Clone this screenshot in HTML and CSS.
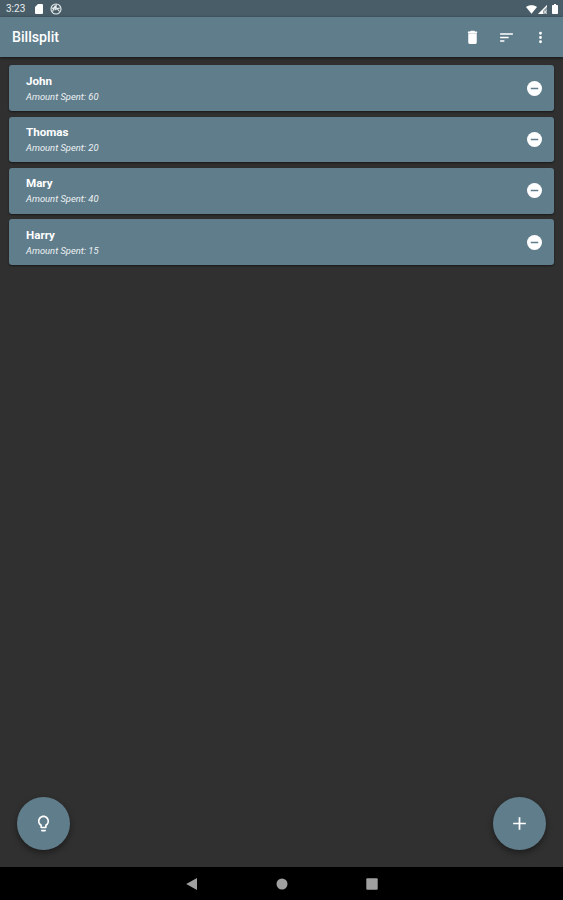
FILE: index.html
```html
<!DOCTYPE html>
<html lang="en">
<head>
  <meta charset="UTF-8">
  <title>Billsplit</title>
  <meta name="viewport" content="width=device-width, initial-scale=1">
  <link rel="stylesheet" href="styles.css">
</head>
<body>
  <div class="status-bar">
    <span class="time">3:23</span>
    <svg class="sd" viewBox="0 0 16 20"><path d="M6 0h8a2 2 0 0 1 2 2v16a2 2 0 0 1-2 2H2a2 2 0 0 1-2-2V6z"/></svg>
    <svg class="sync" viewBox="0 0 24 24">
      <circle cx="12" cy="12" r="10"/>
      <path d="M5 17l5-11 9 11M4 11l9-4M13 3l-3 9M9 14l6-3 5-1"/>
    </svg>
    <div class="signals">
      <svg class="wifi" viewBox="0 0 24 19"><path d="M12 19L0 4C6-1 18-1 24 4z"/></svg>
      <svg class="cell" viewBox="0 0 20 20"><path d="M0 20L20 0v20z" opacity=".4"/><path d="M0 20L20 0v4L11 13v7z"/><path d="M13 12l6 7M19 12l-6 7" stroke="#fff" stroke-width="1.500"/></svg>
      <svg class="battery" viewBox="0 0 12 20"><path d="M4 0h4v2h2.500a1.500 1.500 0 0 1 1.500 1.500v15a1.500 1.500 0 0 1-1.500 1.500h-9A1.500 1.500 0 0 1 0 18.500v-15A1.500 1.500 0 0 1 1.500 2H4z"/></svg>
    </div>
  </div>

  <header class="app-bar">
    <h1>Billsplit</h1>
    <div class="actions">
      <svg viewBox="0 0 24 24"><path d="M6 19c0 1.100.9 2 2 2h8c1.100 0 2-.9 2-2V6H6v13zM18.500 3.500h-3l-1-1h-5l-1 1h-3v2h13v-2z"/></svg>
      <svg viewBox="0 0 24 24"><path d="M3 18h6v-2H3v2zM3 6v2h18V6H3zm0 7h12v-2H3v2z"/></svg>
      <svg viewBox="0 0 24 24"><path d="M12 8a2 2 0 1 0 0-4 2 2 0 0 0 0 4zm0 2a2 2 0 1 0 0 4 2 2 0 0 0 0-4zm0 6a2 2 0 1 0 0 4 2 2 0 0 0 0-4z"/></svg>
    </div>
  </header>

  <main class="people">
    <div class="card">
      <div>
        <p class="name">John</p>
        <p class="spent">Amount Spent: 60</p>
      </div>
      <svg class="remove" viewBox="0 0 20 20"><circle cx="10" cy="10" r="10"/><path d="M5 9h10v2H5z"/></svg>
    </div>
    <div class="card">
      <div>
        <p class="name">Thomas</p>
        <p class="spent">Amount Spent: 20</p>
      </div>
      <svg class="remove" viewBox="0 0 20 20"><circle cx="10" cy="10" r="10"/><path d="M5 9h10v2H5z"/></svg>
    </div>
    <div class="card">
      <div>
        <p class="name">Mary</p>
        <p class="spent">Amount Spent: 40</p>
      </div>
      <svg class="remove" viewBox="0 0 20 20"><circle cx="10" cy="10" r="10"/><path d="M5 9h10v2H5z"/></svg>
    </div>
    <div class="card">
      <div>
        <p class="name">Harry</p>
        <p class="spent">Amount Spent: 15</p>
      </div>
      <svg class="remove" viewBox="0 0 20 20"><circle cx="10" cy="10" r="10"/><path d="M5 9h10v2H5z"/></svg>
    </div>
  </main>

  <div class="fabs">
    <div class="fab">
      <svg viewBox="0 0 24 24"><path d="M9 21c0 .55.45 1 1 1h4c.55 0 1-.45 1-1v-1H9v1zm3-19C8.140 2 5 5.140 5 9c0 2.380 1.190 4.470 3 5.740V17c0 .55.45 1 1 1h6c.55 0 1-.45 1-1v-2.260c1.810-1.270 3-3.360 3-5.740 0-3.860-3.140-7-7-7zm2.850 11.100l-.85.6V16h-4v-2.300l-.85-.6A4.997 4.997 0 0 1 7 9c0-2.760 2.240-5 5-5s5 2.240 5 5c0 1.630-.8 3.160-2.150 4.100z"/></svg>
    </div>
    <div class="fab">
      <svg viewBox="0 0 24 24"><path d="M20 13.100h-6.900V20h-2.200v-6.900H4v-2.200h6.900V4h2.200v6.900H20z"/></svg>
    </div>
  </div>

  <nav class="nav-bar">
    <svg viewBox="0 0 12 12"><path d="M.2 6L11 0v12z"/></svg>
    <svg viewBox="0 0 12 12"><circle cx="6" cy="6" r="5.500"/></svg>
    <svg viewBox="0 0 12 12"><rect x=".3" y=".3" width="11.400" height="11.400" rx="1"/></svg>
  </nav>
</body>
</html>
```
FILE: styles.css
```css
* {
  box-sizing: border-box;
}

body {
  font-family: Roboto, sans-serif;
  background: #303030;
  color: #fff;
  margin: 0;
  height: 900px;
  display: flex;
  flex-direction: column;
}

h1, p {
  margin: 0;
}

svg {
  display: block;
  fill: #fff;
}

.status-bar {
  height: 17px;
  background: #485d68;
  display: flex;
  align-items: center;
  padding: 1px 5px 0 6px;
}

.time {
  width: 29px;
  font-size: 10px;
  line-height: 16px;
  color: #e8edef;
}

.sd {
  width: 8px;
  height: 10px;
}

.sync {
  width: 12px;
  height: 12px;
  margin-left: 7px;
  fill: none;
  stroke: #e8edef;
  stroke-width: 2.2;
}

.signals {
  display: flex;
  align-items: center;
  margin-left: auto;
}

.wifi {
  width: 11px;
  height: 9px;
}

.cell {
  width: 9px;
  height: 9px;
  margin: 0 5px 0 1px;
}

.battery {
  width: 6px;
  height: 10px;
}

.app-bar {
  height: 40px;
  background: #607d8b;
  box-shadow: 0 1px 3px rgba(0,0,0,0.6);
  display: flex;
  align-items: center;
  justify-content: space-between;
  padding: 0 14px 0 12px;
}

.app-bar h1 {
  font-size: 14.2px;
  font-weight: 500;
  line-height: 20px;
}

.actions {
  display: flex;
  gap: 17px;
}

.actions svg {
  width: 17px;
  height: 17px;
}

.people {
  flex: 1;
  display: flex;
  flex-direction: column;
  gap: 5.7px;
  padding: 8.2px 9px 0;
}

.card {
  height: 45.7px;
  background: #607d8b;
  border-radius: 3px;
  box-shadow: 0 1px 2px rgba(0,0,0,0.5);
  display: flex;
  align-items: center;
  justify-content: space-between;
  padding: 1px 12px 0 17px;
}

.name {
  font-size: 11.6px;
  font-weight: 700;
  line-height: 16px;
}

.spent {
  font-size: 9.4px;
  font-style: italic;
  line-height: 16px;
  color: #eef2f4;
}

.remove {
  width: 15px;
  height: 15px;
  margin-top: -1px;
}

.remove path {
  fill: #607d8b;
}

.fabs {
  display: flex;
  justify-content: space-between;
  padding: 0 17px 17px;
}

.fab {
  width: 53px;
  height: 53px;
  border-radius: 50%;
  background: #607d8b;
  box-shadow: 0 3px 6px rgba(0,0,0,0.4);
  display: flex;
  align-items: center;
  justify-content: center;
}

.fab svg {
  width: 19px;
  height: 19px;
}

.nav-bar {
  height: 33px;
  background: #000;
  display: flex;
  align-items: center;
  justify-content: center;
  gap: 78px;
}

.nav-bar svg {
  width: 12px;
  height: 12px;
  fill: #a0a0a0;
}
```
